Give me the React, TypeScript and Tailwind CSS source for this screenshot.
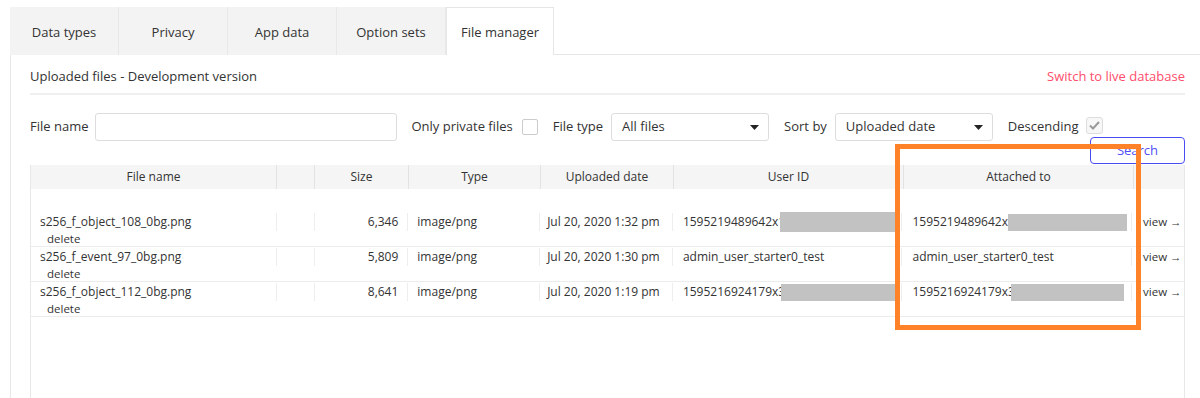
import React from 'react'

// 文件管理页面 - 上传文件列表

const font = { fontFamily: '"Open Sans", "Liberation Sans", sans-serif' }

const Caret = () => (
  <svg width="9" height="5" viewBox="0 0 9 5" className="shrink-0">
    <path d="M0 0 L9 0 L4.5 5 Z" fill="#222" />
  </svg>
)

const Redact = ({ w, h = 'h-[17px]', ml = '' }: { w: string; h?: string; ml?: string }) => (
  <span className={`inline-block ${w} ${h} ${ml} bg-[#c2c2c2] shrink-0`} />
)

type RowData = {
  name: string
  size: string
  date: string
  user: React.ReactNode
  attached: React.ReactNode
}

const rows: RowData[] = [
  {
    name: 's256_f_object_108_0bg.png',
    size: '6,346',
    date: 'Jul 20, 2020 1:32 pm',
    user: (
      <>
        <span>1595219489642x1</span>
        <Redact w="w-[116px]" h="h-[20px]" ml="-ml-[5px]" />
      </>
    ),
    attached: (
      <>
        <span>1595219489642x</span>
        <Redact w="w-[119px]" />
      </>
    ),
  },
  {
    name: 's256_f_event_97_0bg.png',
    size: '5,809',
    date: 'Jul 20, 2020 1:30 pm',
    user: <span>admin_user_starter0_test</span>,
    attached: <span>admin_user_starter0_test</span>,
  },
  {
    name: 's256_f_object_112_0bg.png',
    size: '8,641',
    date: 'Jul 20, 2020 1:19 pm',
    user: (
      <>
        <span>1595216924179x3</span>
        <Redact w="w-[115px]" ml="-ml-[4px]" />
      </>
    ),
    attached: (
      <>
        <span>1595216924179x3</span>
        <Redact w="w-[113px]" ml="-ml-[4px]" />
      </>
    ),
  },
]

const tabs = ['Data types', 'Privacy', 'App data', 'Option sets', 'File manager']

const FileRow = ({ row }: { row: RowData }) => (
  <div className="border-b border-[#ececec] pt-[1px]">
    <div className="flex h-[18px] items-center text-[12px] text-[#333] whitespace-nowrap">
      <div className="w-[246px] h-full flex items-center pl-[9px] border-r border-[#eeeeee]">{row.name}</div>
      <div className="w-[38px] h-full border-r border-[#eeeeee]" />
      <div className="w-[94px] h-full flex items-center justify-end pr-[9px] border-r border-[#eeeeee]">{row.size}</div>
      <div className="w-[132px] h-full flex items-center pl-[9px] border-r border-[#eeeeee]">image/png</div>
      <div className="w-[133px] h-full flex items-center pl-[7px] border-r border-[#eeeeee]">{row.date}</div>
      <div className="w-[230px] h-full flex items-center pl-[10px] border-r border-[#eeeeee]">{row.user}</div>
      <div className="w-[230px] h-full flex items-center pl-[10px] border-r border-[#eeeeee]">{row.attached}</div>
      <div className="w-[52px] h-full flex items-center pl-[11px] text-[11.5px]">view →</div>
    </div>
    <div className="h-[15px] pl-[16px] text-[11.5px] leading-[15px] text-[#333]">delete</div>
  </div>
)

export default function App() {
  return (
    <div className="relative h-[398px] overflow-hidden bg-white pt-[7px] pl-[10px] flex flex-col" style={font}>
      {/* 标签栏 */}
      <div className="flex h-[48px] shrink-0">
        {tabs.map((t) =>
          t === 'File manager' ? (
            <div
              key={t}
              className="w-[108px] flex items-center justify-center pt-[3px] bg-white border-t border-x border-[#e6e6e6] text-[13px] text-[#333]"
            >
              {t}
            </div>
          ) : (
            <div
              key={t}
              className="w-[109px] flex items-center justify-center pt-[3px] bg-[#f3f3f3] border-r border-[#e8e8e8] text-[13px] text-[#333]"
            >
              {t}
            </div>
          )
        )}
        <div className="flex-1 border-b border-[#e6e6e6]" />
      </div>

      {/* 主面板 */}
      <div className="flex-1 flex flex-col border-l border-[#e8e8e8] pl-[19px] pr-[15px] min-h-0">
        <div className="mt-[13px] h-[18px] flex items-center justify-between text-[13px]">
          <span className="text-[#333]">Uploaded files - Development version</span>
          <span className="text-[#ff4d6b]">Switch to live database</span>
        </div>
        <div className="mt-[7px] h-[2px] bg-[#efefef]" />

        {/* 筛选条件 */}
        <div className="mt-[18px] h-[28px] flex items-center text-[13px] text-[#333]">
          <span>File name</span>
          <div className="ml-[7px] w-[302px] h-[28px] border border-[#dddddd] rounded-[3px]" />
          <span className="ml-[14px]">Only private files</span>
          <div className="ml-[9px] w-[16px] h-[16px] border border-[#cccccc] rounded-[2px]" />
          <span className="ml-[15px]">File type</span>
          <div className="ml-[8px] w-[158px] h-[28px] border border-[#dddddd] rounded-[3px] flex items-center justify-between pl-[10px] pr-[9px]">
            <span>All files</span>
            <Caret />
          </div>
          <span className="ml-[15px]">Sort by</span>
          <div className="ml-[8px] w-[158px] h-[28px] border border-[#dddddd] rounded-[3px] flex items-center justify-between pl-[10px] pr-[9px]">
            <span>Uploaded date</span>
            <Caret />
          </div>
          <span className="ml-[15px]">Descending</span>
          <div className="ml-[7px] -mt-[4px] w-[17px] h-[17px] border border-[#dddddd] rounded-[3px] bg-[#f7f7f7] flex items-center justify-center">
            <svg width="11" height="9" viewBox="0 0 11 9">
              <path d="M1 4.5 L4 7.5 L10 1" fill="none" stroke="#9a9a9a" strokeWidth="2" />
            </svg>
          </div>
        </div>
        <div className="-mt-[4px] flex justify-end">
          <div className="w-[95px] h-[27px] border border-[#4b4bf2] rounded-[4px] flex items-center justify-center text-[13px] text-[#4f4ff5] bg-white">
            Search
          </div>
        </div>

        {/* 文件表格 */}
        <div className="mt-[1px] flex-1 flex flex-col border-x border-[#e8e8e8]">
          <div className="flex h-[24px] bg-[#f5f5f5] text-[12px] text-[#333]">
            <div className="w-[246px] flex items-center justify-center border-r border-[#e2e2e2]">File name</div>
            <div className="w-[38px] border-r border-[#e2e2e2]" />
            <div className="w-[94px] flex items-center justify-center border-r border-[#e2e2e2]">Size</div>
            <div className="w-[132px] flex items-center justify-center border-r border-[#e2e2e2]">Type</div>
            <div className="w-[133px] flex items-center justify-center border-r border-[#e2e2e2]">Uploaded date</div>
            <div className="w-[230px] flex items-center justify-center border-r border-[#e2e2e2]">User ID</div>
            <div className="w-[230px] flex items-center justify-center border-r border-[#e2e2e2]">Attached to</div>
            <div className="flex-1" />
          </div>
          <div className="h-[23px]" />
          {rows.map((r) => (
            <FileRow key={r.name} row={r} />
          ))}
        </div>
      </div>

      {/* 标注框 */}
      <div className="absolute left-[895px] top-[144px] w-[246px] h-[186px] border-[5px] border-[#ff8128] pointer-events-none" />
    </div>
  )
}
